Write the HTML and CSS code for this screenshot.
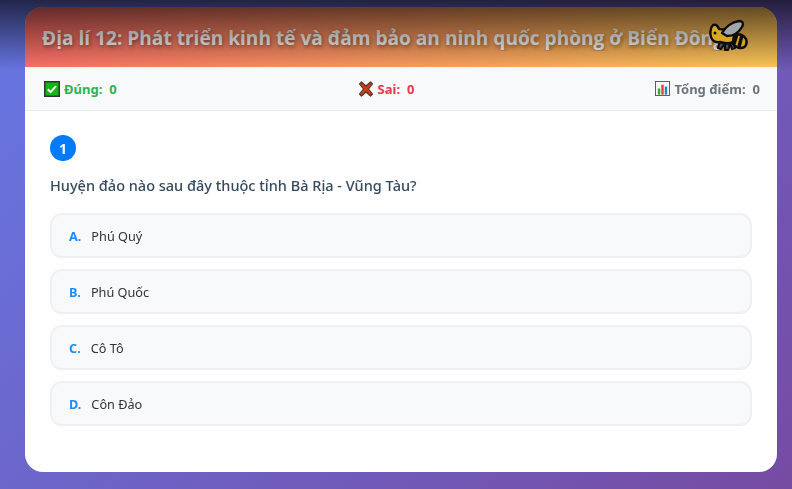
FILE: index.html
```html
<!DOCTYPE html>
<html lang="vi">
<head>
<meta charset="utf-8">
<title>Địa lí 12</title>
<link rel="stylesheet" href="styles.css">
</head>
<body>
<main class="card">
  <header class="head">
    <h1 class="title">Địa lí 12: Phát triển kinh tế và đảm bảo an ninh quốc phòng ở Biển Đông</h1>
  </header>
  <section class="stats">
    <div class="stat ok">
      <svg class="ico" viewBox="0 0 16 16"><rect x="0.75" y="0.75" width="14.5" height="14.500" fill="#12b812" stroke="#333" stroke-width="1.5"/><path d="M3.8 8.3l2.8 2.8 5.4-6" fill="none" stroke="#fff" stroke-width="2"/></svg>
      <span>Đúng:</span><span>0</span>
    </div>
    <div class="stat bad">
      <svg class="ico" viewBox="0 0 16 16"><path d="M1.5 3l2-2L8 5l4.500-4 2 2L10.500 8l4 5-2 2L8 11l-4.500 4-2-2 4-5z" fill="#d63a12" stroke="#4a3a34" stroke-width="1.200" stroke-linejoin="round"/></svg>
      <span>Sai:</span><span>0</span>
    </div>
    <div class="stat total">
      <svg class="ico" viewBox="0 0 16 16"><rect x="0.5" y="0.5" width="15" height="15" fill="#f6f8f8" stroke="#555"/><rect x="3" y="8" width="2.600" height="6.500" fill="#3aa63a"/><rect x="6.700" y="4" width="2.600" height="10.500" fill="#e2452c"/><rect x="10.400" y="6" width="2.600" height="8.500" fill="#2a7fd6"/></svg>
      <span>Tổng điểm:</span><span>0</span>
    </div>
  </section>
  <section class="body">
    <div class="num">1</div>
    <p class="q">Huyện đảo nào sau đây thuộc tỉnh Bà Rịa - Vũng Tàu?</p>
    <ul class="opts">
      <li class="opt"><b>A.</b><span>Phú Quý</span></li>
      <li class="opt"><b>B.</b><span>Phú Quốc</span></li>
      <li class="opt"><b>C.</b><span>Cô Tô</span></li>
      <li class="opt"><b>D.</b><span>Côn Đảo</span></li>
    </ul>
  </section>
</main>
<div class="shade"></div>
<svg class="bee" viewBox="0 0 40 34">
  <path d="M11 22l-2 7 3 1 4-6zM16 24l0 7 3 0 2-6zM21 24l2 6 3-1-1-6z" fill="#4c555f" stroke="#0d0d0d" stroke-width="2.200" stroke-linejoin="round"/>
  <path d="M25 16c5-2 10 0 12 4 2 5-1 9-5 9-5 0-9-4-10-8z" fill="#d4a124" stroke="#0d0d0d" stroke-width="2.400" stroke-linejoin="round"/>
  <path d="M28 15l-3 10M33 16l-3 12" stroke="#0d0d0d" stroke-width="3.400"/>
  <path d="M4 6c3-1 5 1 6 4 5 0 10 2 15 6l-1 7c-5 2-10 1-13 0-4 1-8-1-9-5-1-3-1-9 2-12z" fill="#d9a724" stroke="#0d0d0d" stroke-width="2.400" stroke-linejoin="round"/>
  <path d="M13 14c3-6 10-11 17-12 4 0 5 3 3 6-3 5-8 9-15 9z" fill="#a2a6aa" stroke="#0d0d0d" stroke-width="2.400" stroke-linejoin="round"/>
  <circle cx="6" cy="14" r="1.500" fill="#0d0d0d"/>
</svg>
</body>
</html>
```
FILE: styles.css
```css
* { box-sizing: border-box; }
html, body { height: 100%; }
body {
  margin: 0;
  padding: 7px 15px 17px 25px;
  overflow: hidden;
  background: linear-gradient(135deg, #6677e4 0%, #764ba2 100%);
  font-family: "Noto Sans", "Open Sans", sans-serif;
}
.card {
  height: 465px;
  background: #fff;
  border-radius: 18px;
  overflow: hidden;
  display: flex;
  flex-direction: column;
  filter: blur(0.35px);
}
.head {
  height: 60px;
  flex: none;
  padding: 2px 17px 0;
  display: flex;
  align-items: center;
  background: linear-gradient(135deg, #ff6b6b, #feca57);
}
.title {
  margin: 0;
  overflow: hidden;
  white-space: nowrap;
  color: #fff;
  font-size: 19.1px;
  font-weight: 700;
  font-family: "Open Sans", sans-serif;
  text-shadow: 1px 2px 4px rgba(0,0,0,.4);
}
.stats {
  height: 44px;
  flex: none;
  padding: 0 17px 0 19px;
  display: flex;
  justify-content: space-between;
  align-items: center;
  background: #f8f9fa;
  border-bottom: 1px solid #e9ecef;
  font-size: 13px;
  font-weight: 700;
}
.stat { display: flex; align-items: center; gap: 7px; }
.stat .ico { width: 16px; height: 16px; margin-right: -3px; }
.ok { color: #2eb24f; }
.bad { color: #e63950; }
.total { color: #6c757d; }
.total .ico { width: 15px; height: 15px; }
.body { padding: 24px 25px 0 25px; }
.num {
  width: 26px;
  height: 26px;
  border-radius: 50%;
  background: #007bff;
  color: #fff;
  font-size: 14px;
  font-weight: 700;
  display: flex;
  align-items: center;
  justify-content: center;
}
.q {
  margin: 14px 0 18px;
  font-size: 14.5px;
  line-height: 20px;
  font-weight: 500;
  color: #34495e;
}
.opts {
  margin: 0;
  padding: 0;
  list-style: none;
  display: flex;
  flex-direction: column;
  gap: 11px;
}
.opt {
  height: 45px;
  padding: 0 17px;
  display: flex;
  align-items: center;
  gap: 10px;
  background: #f8f9fa;
  border: 2px solid #eef0f3;
  border-radius: 12px;
  font-size: 12.7px;
  color: #333;
}
.opt b { color: #1a8cff; }
.shade {
  position: absolute;
  top: 0;
  left: 0;
  right: 0;
  height: 70px;
  background: linear-gradient(to bottom, rgba(0,0,0,.68), rgba(0,0,0,0));
  pointer-events: none;
}
.bee {
  position: absolute;
  left: 709px;
  top: 19px;
  width: 40px;
  height: 34px;
  filter: blur(0.35px);
}
```
